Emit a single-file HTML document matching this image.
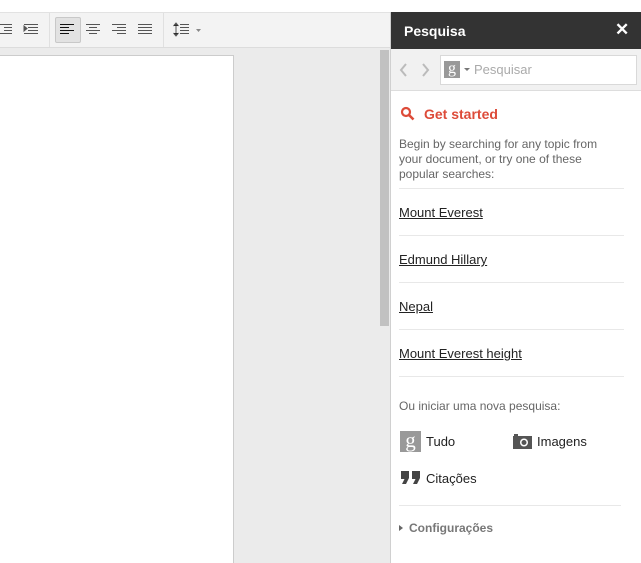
<!DOCTYPE html><html><head><style>
*{margin:0;padding:0;box-sizing:border-box}
body{width:641px;height:563px;overflow:hidden;background:#fff;font-family:"Liberation Sans",Arial,sans-serif;position:relative}
.a{position:absolute}
.lk{position:absolute;left:399px;font-size:13px;color:#222;text-decoration:underline}
.hr{position:absolute;left:399px;width:225px;height:1px;background:#e8e8e8}
</style></head><body>
<div class="a" style="left:0;top:12px;width:391px;height:36px;background:#f3f3f3;border-top:1px solid #e2e2e2;border-bottom:1px solid #dcdcdc"></div>
<div class="a" style="left:49px;top:13px;width:1px;height:34px;background:#e0e0e0"></div>
<div class="a" style="left:163px;top:13px;width:1px;height:34px;background:#e0e0e0"></div>
<div class="a" style="left:55px;top:17px;width:26px;height:26px;background:#e2e2e2;border:1px solid #c8c8c8;border-radius:2px"></div>
<svg class="a" style="left:0;top:0" width="220" height="48">
<g stroke="#555" stroke-width="1">
<path d="M0 24.5h12M4 27.5h8M4 30.5h8M0 33.5h12"/>
<path d="M24 24.5h14M28 27.5h10M28 30.5h10M24 33.5h14"/><path d="M24 26l3 2.5-3 2.5z" fill="#555"/>
<path d="M60 24.5h14M60 27.5h9M60 30.5h14M60 33.5h9" stroke="#111"/>
<path d="M86 24.5h14M89 27.5h8M86 30.5h14M89 33.5h8"/>
<path d="M112 24.5h14M117 27.5h9M112 30.5h14M117 33.5h9"/>
<path d="M138 24.5h14M138 27.5h14M138 30.5h14M138 33.5h14"/>
<path d="M176 24v11M173.5 26l2.5-3 2.5 3M173.5 33l2.5 3 2.5-3M180 24.5h9M180 27.5h9M180 30.5h9M180 33.5h9"/>
</g><path d="M196 29h5l-2.5 3z" fill="#888"/></svg>
<div class="a" style="left:0;top:48px;width:390px;height:515px;background:#ebebeb"></div>
<div class="a" style="left:0;top:55px;width:234px;height:508px;background:#fff;border-right:1px solid #ccc;border-top:1px solid #ccc"></div>
<div class="a" style="left:380px;top:50px;width:9px;height:276px;background:#c1c1c1"></div>
<div class="a" style="left:390px;top:12px;width:1px;height:551px;background:#d0d0d0"></div>
<div class="a" style="left:391px;top:12px;width:250px;height:37px;background:#333"></div>
<div class="a" style="left:404px;top:23px;font-size:14px;font-weight:bold;color:#fff">Pesquisa</div>
<div class="a" style="left:615px;top:20px;font-size:17px;font-weight:bold;color:#fff">✕</div>
<div class="a" style="left:391px;top:49px;width:250px;height:42px;background:#f1f1f1;border-bottom:1px solid #ddd"></div>
<svg class="a" style="left:397px;top:61px" width="40" height="18"><path d="M9 3l-5 6 5 6M26 3l5 6-5 6" stroke="#bbb" stroke-width="2" fill="none"/></svg>
<div class="a" style="left:440px;top:55px;width:197px;height:30px;background:#fff;border:1px solid #d9d9d9"></div>
<div class="a" style="left:444px;top:61px;width:16px;height:17px;background:#999;color:#fff;font-family:'Liberation Serif',serif;font-size:16px;text-align:center;line-height:15px">g</div>
<div class="a" style="left:464px;top:68px;border:3px solid transparent;border-top:3px solid #777"></div>
<div class="a" style="left:474px;top:62px;font-size:13px;color:#aaa">Pesquisar</div>
<svg class="a" style="left:400px;top:106px" width="16" height="16"><circle cx="6" cy="6" r="4" stroke="#dd4b39" stroke-width="2.2" fill="none"/><path d="M9 9l4.5 4.5" stroke="#dd4b39" stroke-width="2.6"/></svg>
<div class="a" style="left:424px;top:106px;font-size:14px;font-weight:bold;color:#dd4b39">Get started</div>
<div class="a" style="left:399px;top:137px;width:220px;font-size:12px;line-height:15px;color:#666">Begin by searching for any topic from your document, or try one of these popular searches:</div>
<div class="hr" style="top:188px"></div>
<div class="lk" style="top:205px">Mount Everest</div>
<div class="hr" style="top:235px"></div>
<div class="lk" style="top:252px">Edmund Hillary</div>
<div class="hr" style="top:282px"></div>
<div class="lk" style="top:299px">Nepal</div>
<div class="hr" style="top:329px"></div>
<div class="lk" style="top:346px">Mount Everest height</div>
<div class="hr" style="top:376px"></div>
<div class="a" style="left:399px;top:399px;font-size:12px;color:#666">Ou iniciar uma nova pesquisa:</div>
<div class="a" style="left:400px;top:431px;width:21px;height:21px;background:#999;color:#fff;font-family:'Liberation Serif',serif;font-size:21px;text-align:center;line-height:18px">g</div>
<div class="a" style="left:426px;top:434px;font-size:13px;color:#222">Tudo</div>
<svg class="a" style="left:513px;top:434px" width="19" height="15"><rect x="0" y="2" width="19" height="13" fill="#555"/><rect x="1" y="0" width="4" height="3" fill="#555"/><circle cx="11" cy="8.5" r="4" fill="#fff"/><circle cx="11" cy="8.5" r="2.5" fill="#555"/></svg>
<div class="a" style="left:537px;top:434px;font-size:13px;color:#222">Imagens</div>
<svg class="a" style="left:401px;top:471px" width="20" height="14"><path d="M0 0h8v7l-3 6h-4l2.5-5H0zM11 0h8v7l-3 6h-4l2.5-5H11z" fill="#444"/></svg>
<div class="a" style="left:426px;top:471px;font-size:13px;color:#222">Citações</div>
<div class="hr" style="top:505px;width:222px"></div>
<div class="a" style="left:399px;top:525px;border:3px solid transparent;border-left:4px solid #666"></div>
<div class="a" style="left:409px;top:521px;font-size:12px;font-weight:bold;color:#777">Configurações</div>
</body></html>
